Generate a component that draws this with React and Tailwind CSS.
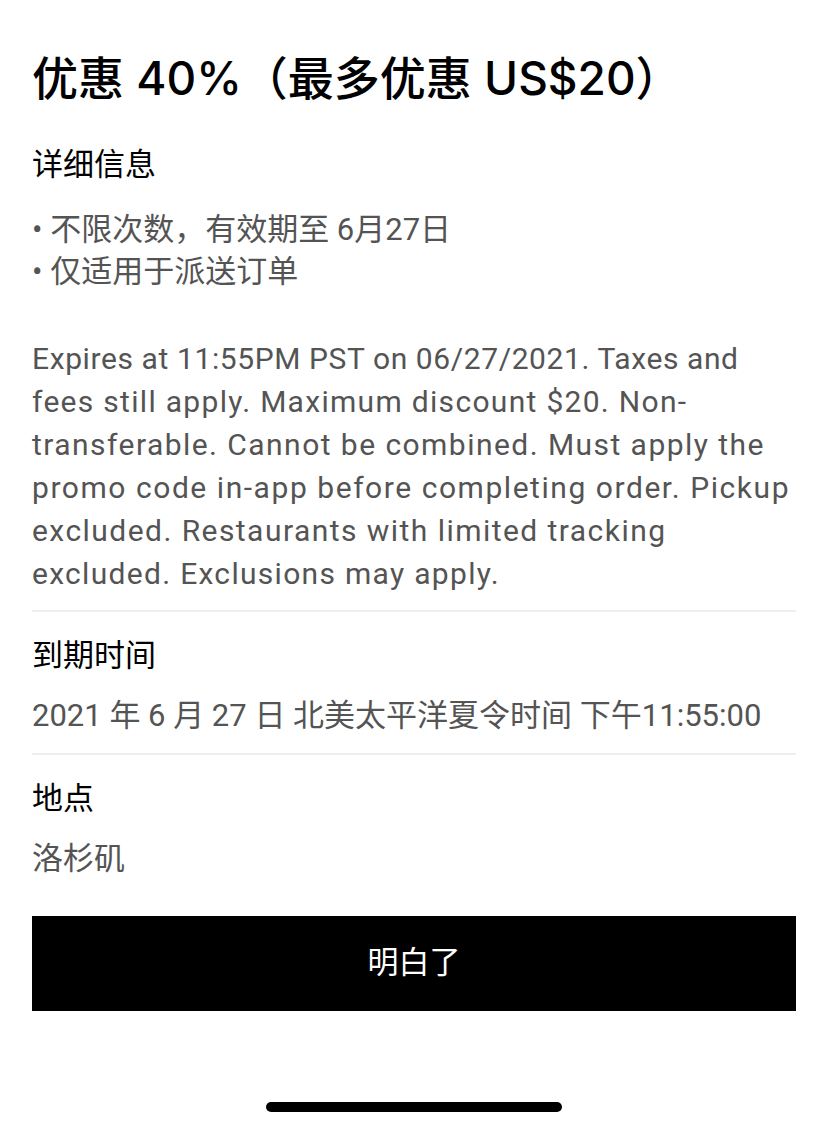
export default function App() {
  const font = { fontFamily: 'Roboto, "Noto Sans CJK SC", sans-serif' };
  const titleFont = { fontFamily: 'Inter, "Noto Sans CJK SC", sans-serif' };
  return (
    <div
      className="w-[828px] h-[1128px] bg-white flex flex-col px-8 text-black overflow-hidden"
      style={font}
    >
      <h1
        className="mt-[50px] text-[46px] leading-[56px] font-medium"
        style={titleFont}
      >
        优惠 40%（最多优惠 US$20）
      </h1>
      <h2 className="mt-[38px] text-[31px] leading-[42px] font-normal">详细信息</h2>
      <div className="mt-[23px] text-[31px] leading-[42px] text-[#545454]">
        <div>• 不限次数，有效期至 6月27日</div>
        <div>• 仅适用于派送订单</div>
      </div>
      <div className="mt-[44px] text-[30px] leading-[43px] text-[#545454] whitespace-nowrap">
        <div className="tracking-[0.6px]">Expires at 11:55PM PST on 06/27/2021. Taxes and</div>
        <div className="tracking-[1.3px]">fees still apply. Maximum discount $20. Non-</div>
        <div className="tracking-[1.45px]">transferable. Cannot be combined. Must apply the</div>
        <div className="tracking-[1.55px]">promo code in-app before completing order. Pickup</div>
        <div className="tracking-[1.45px]">excluded. Restaurants with limited tracking</div>
        <div className="tracking-[1.3px]">excluded. Exclusions may apply.</div>
      </div>
      <div className="mt-[15px] h-[2px] bg-[#eeeeee]" />
      <div className="mt-[23px] text-[31px] leading-[42px]">到期时间</div>
      <div className="mt-[18px] text-[31px] leading-[42px] text-[#545454]">
        2021 年 6 月 27 日 北美太平洋夏令时间 下午11:55:00
      </div>
      <div className="mt-[16px] h-[2px] bg-[#eeeeee]" />
      <div className="mt-[23px] text-[31px] leading-[42px]">地点</div>
      <div className="mt-[18px] text-[31px] leading-[42px] text-[#545454]">洛杉矶</div>
      <button className="mt-[36px] h-[95px] w-full bg-black text-white text-[31px] font-normal flex items-center justify-center">
        明白了
      </button>
      <div className="mt-auto mb-[16px] mx-auto w-[296px] h-[10px] rounded-full bg-black" />
    </div>
  );
}
